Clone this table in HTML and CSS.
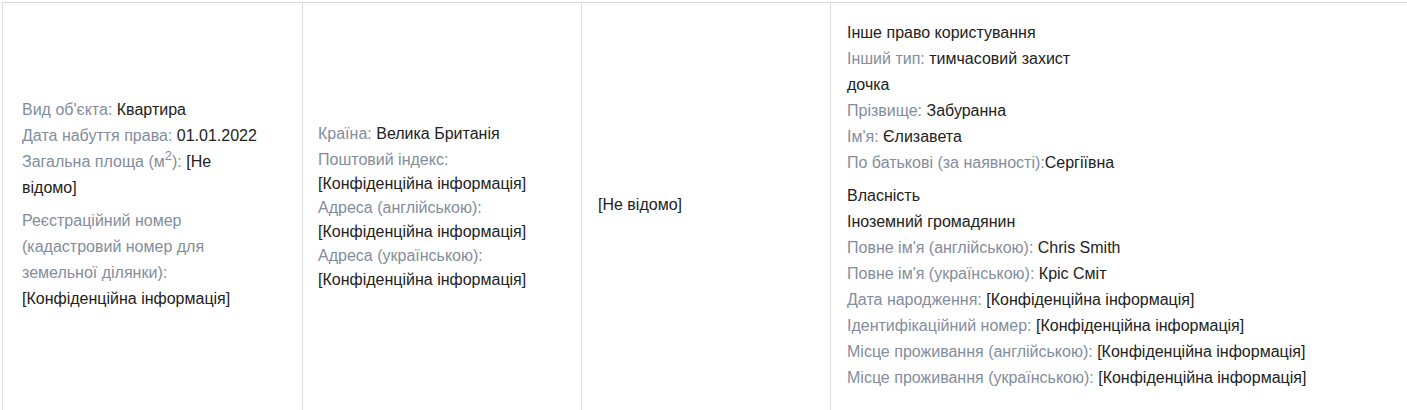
FILE: index.html
```html
<!DOCTYPE html>
<html lang="uk">
<head>
<meta charset="utf-8">
<title>Об'єкт</title>
<link rel="stylesheet" href="styles.css">
</head>
<body>
<div class="info-row">
  <div class="cell cell-object">
    <div class="group">
      <div class="field"><span class="label">Вид об'єкта:</span> <span class="value">Квартира</span></div>
      <div class="field"><span class="label">Дата набуття права:</span> <span class="value">01.01.2022</span></div>
      <div class="field"><span class="label">Загальна площа (м<sup>2</sup>):</span> <span class="value">[Не відомо]</span></div>
    </div>
    <div class="group">
      <div class="field"><span class="label">Реєстраційний номер (кадастровий номер для земельної ділянки):</span> <span class="value">[Конфіденційна інформація]</span></div>
    </div>
  </div>
  <div class="cell cell-address">
    <div class="address">
      <div class="field field-first"><span class="label">Країна:</span> <span class="value">Велика Британія</span></div>
      <div class="field"><span class="label">Поштовий індекс:</span> <span class="value">[Конфіденційна інформація]</span></div>
      <div class="field"><span class="label">Адреса (англійською):</span> <span class="value">[Конфіденційна інформація]</span></div>
      <div class="field"><span class="label">Адреса (українською):</span> <span class="value">[Конфіденційна інформація]</span></div>
    </div>
  </div>
  <div class="cell cell-unknown">
    <span class="value">[Не відомо]</span>
  </div>
  <div class="cell cell-rights">
    <div class="group">
      <div class="field"><span class="value">Інше право користування</span></div>
      <div class="field"><span class="label">Інший тип:</span> <span class="value">тимчасовий захист</span></div>
      <div class="field"><span class="value">дочка</span></div>
      <div class="field"><span class="label">Прізвище:</span> <span class="value">Забуранна</span></div>
      <div class="field"><span class="label">Ім'я:</span> <span class="value">Єлизавета</span></div>
      <div class="field"><span class="label">По батькові (за наявності):</span><span class="value">Сергіївна</span></div>
    </div>
    <div class="group">
      <div class="field"><span class="value">Власність</span></div>
      <div class="field"><span class="value">Іноземний громадянин</span></div>
      <div class="field"><span class="label">Повне ім'я (англійською):</span> <span class="value">Chris Smith</span></div>
      <div class="field"><span class="label">Повне ім'я (українською):</span> <span class="value">Кріс Сміт</span></div>
      <div class="field"><span class="label">Дата народження:</span> <span class="value">[Конфіденційна інформація]</span></div>
      <div class="field"><span class="label">Ідентифікаційний номер:</span> <span class="value">[Конфіденційна інформація]</span></div>
      <div class="field"><span class="label">Місце проживання (англійською):</span> <span class="value">[Конфіденційна інформація]</span></div>
      <div class="field"><span class="label">Місце проживання (українською):</span> <span class="value">[Конфіденційна інформація]</span></div>
    </div>
  </div>
</div>
</body>
</html>
```

FILE: styles.css
```css
html, body {
  margin: 0;
  padding: 0;
  background: #ffffff;
  overflow: hidden;
}

body {
  font-family: "Liberation Sans", Arial, sans-serif;
  font-size: 16px;
  color: #222222;
}

.info-row {
  display: grid;
  grid-template-columns: 300px 279px 249px 1fr;
  grid-template-rows: minmax(407px, auto);
  margin: 2px 0 0 2px;
  border-top: 1px solid #dcdcdc;
}

.cell {
  box-sizing: border-box;
  border-left: 1px solid #dcdcdc;
  display: flex;
  flex-direction: column;
  justify-content: center;
  padding: 15px 16px 21px;
  line-height: 26px;
}

.cell-object {
  padding-left: 19px;
  padding-right: 35px;
}

.cell-address {
  line-height: 24px;
  padding-left: 15px;
  padding-right: 33px;
}

.cell-rights {
  padding-top: 17px;
}

.address {
  padding-top: 4px;
}

.group + .group {
  margin-top: 7px;
}

.field-first {
  margin-bottom: 2px;
}

.label {
  color: #838d9d;
}

.value {
  color: #222222;
}

sup {
  font-size: 13px;
  line-height: 0;
  vertical-align: 7px;
}
```
